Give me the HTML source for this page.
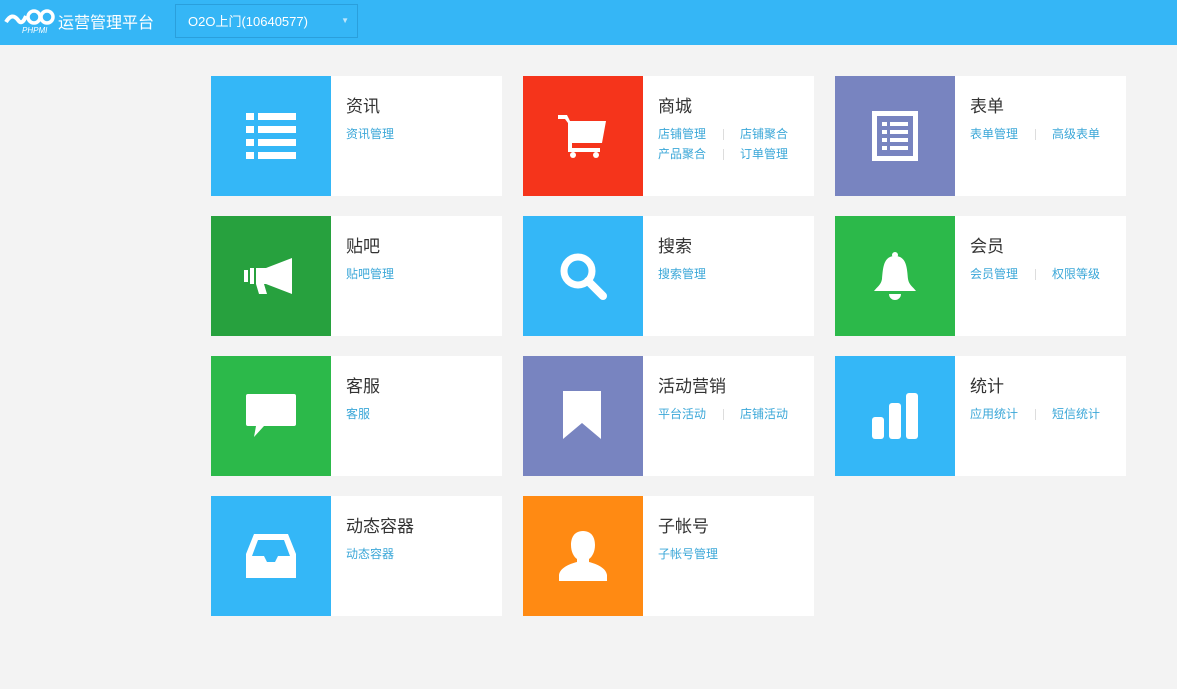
<!DOCTYPE html>
<html><head><meta charset="utf-8"><style>
*{margin:0;padding:0;box-sizing:border-box}
body{width:1177px;height:689px;background:#f3f3f3;font-family:"Liberation Sans","Noto Sans CJK SC",sans-serif;position:relative;overflow:hidden}
.hd{position:absolute;left:0;top:0;width:1177px;height:45px;background:#35b6f6}
.logo{position:absolute;left:4px;top:6px}
.ttl{position:absolute;left:58px;top:9px;color:#fff;font-size:16px}
.sel{position:absolute;left:175px;top:4px;width:183px;height:34px;border:1px solid #2a9fdc;color:#fff;font-size:13px;padding:6px 0 0 12px}
.sel i{position:absolute;right:8px;top:11px;font-style:normal;font-size:8px;color:#bde6fb}
.c{position:absolute;width:291px;height:120px;background:#fff}
.ic{position:absolute;left:0;top:0;width:120px;height:120px;display:flex;align-items:center;justify-content:center}
.t{position:absolute;left:135px;top:16px;font-size:17px;color:#333}
.l{position:absolute;left:135px;top:48px;font-size:12px;color:#3ba7d8;line-height:20px;white-space:nowrap;width:160px}
.l span{display:inline-block}
.l span.s{position:relative;width:82px}
.l span.s:after{content:"";position:absolute;left:65px;top:5px;width:1px;height:11px;background:#ddd}
</style></head><body>
<div class="hd">
<svg class="logo" width="52" height="30" viewBox="0 0 52 30"><path d="M2 16 Q8 6 14 14 Q18 20 22 10" stroke="#fff" stroke-width="4" fill="none"/><circle cx="30" cy="11" r="6" stroke="#fff" stroke-width="3.5" fill="none"/><circle cx="43" cy="11" r="6" stroke="#fff" stroke-width="3.5" fill="none"/><text x="18" y="27" font-size="8" fill="#fff" font-style="italic" font-family="Liberation Sans">PHPMI</text></svg>
<div class="ttl">运营管理平台</div>
<div class="sel">O2O上门(10640577)<i>▼</i></div>
</div>

<div class="c" style="left:211px;top:76px"><div class="ic" style="background:#34b7f7"><svg width="50" height="46" viewBox="0 0 50 46" fill="#fff"><rect x="0" y="0" width="8" height="7"/><rect x="12" y="0" width="38" height="7"/><rect x="0" y="13" width="8" height="7"/><rect x="12" y="13" width="38" height="7"/><rect x="0" y="26" width="8" height="7"/><rect x="12" y="26" width="38" height="7"/><rect x="0" y="39" width="8" height="7"/><rect x="12" y="39" width="38" height="7"/></svg></div><div class="t">资讯</div><div class="l">资讯管理</div></div>

<div class="c" style="left:523px;top:76px"><div class="ic" style="background:#f5341b"><svg width="50" height="46" viewBox="0 0 50 46" fill="#fff"><path d="M0 2h9l3 6h36l-4 22H14v5h28v4H10V10L7 6H0z"/><circle cx="15" cy="42" r="3"/><circle cx="38" cy="42" r="3"/></svg></div><div class="t">商城</div><div class="l"><span class="s">店铺管理</span><span>店铺聚合</span><br><span class="s">产品聚合</span><span>订单管理</span></div></div>

<div class="c" style="left:835px;top:76px"><div class="ic" style="background:#7884c0"><svg width="46" height="50" viewBox="0 0 46 50" fill="#fff"><path d="M0 0h46v50H0zM5 5v40h36V5z"/><rect x="10" y="11" width="5" height="4"/><rect x="18" y="11" width="18" height="4"/><rect x="10" y="19" width="5" height="4"/><rect x="18" y="19" width="18" height="4"/><rect x="10" y="27" width="5" height="4"/><rect x="18" y="27" width="18" height="4"/><rect x="10" y="35" width="5" height="4"/><rect x="18" y="35" width="18" height="4"/></svg></div><div class="t">表单</div><div class="l"><span class="s">表单管理</span><span>高级表单</span></div></div>

<div class="c" style="left:211px;top:216px"><div class="ic" style="background:#27a13e"><svg width="54" height="40" viewBox="0 0 54 40" fill="#fff"><path d="M12 12h10L48 2v36L22 28h-2l3 10h-8l-3-10z"/><rect x="0" y="14" width="4" height="12"/><rect x="6" y="12" width="4" height="16"/></svg></div><div class="t">贴吧</div><div class="l">贴吧管理</div></div>

<div class="c" style="left:523px;top:216px"><div class="ic" style="background:#34b7f7"><svg width="50" height="50" viewBox="0 0 50 50"><circle cx="20" cy="20" r="14" stroke="#fff" stroke-width="7" fill="none"/><path d="M30 30l15 15" stroke="#fff" stroke-width="8" stroke-linecap="round"/></svg></div><div class="t">搜索</div><div class="l">搜索管理</div></div>

<div class="c" style="left:835px;top:216px"><div class="ic" style="background:#2cb94a"><svg width="44" height="50" viewBox="0 0 44 50" fill="#fff"><circle cx="22" cy="4" r="3"/><path d="M22 5C10 5 10 18 9 28 8 34 4 36 1 40h42c-3-4-7-6-8-12C34 18 34 5 22 5z"/><path d="M16 43a6 6 0 0 0 12 0z"/></svg></div><div class="t">会员</div><div class="l"><span class="s">会员管理</span><span>权限等级</span></div></div>

<div class="c" style="left:211px;top:356px"><div class="ic" style="background:#2cb94a"><svg width="50" height="44" viewBox="0 0 50 44" fill="#fff"><path d="M2 0h46a2 2 0 0 1 2 2v28a2 2 0 0 1-2 2H18L8 43l2-11H2a2 2 0 0 1-2-2V2a2 2 0 0 1 2-2z"/></svg></div><div class="t">客服</div><div class="l">客服</div></div>

<div class="c" style="left:523px;top:356px"><div class="ic" style="background:#7884c0"><svg width="40" height="50" viewBox="0 0 40 50" fill="#fff"><path d="M0 0h38v48L19 32 0 48z"/></svg></div><div class="t">活动营销</div><div class="l"><span class="s">平台活动</span><span>店铺活动</span></div></div>

<div class="c" style="left:835px;top:356px"><div class="ic" style="background:#34b7f7"><svg width="46" height="46" viewBox="0 0 46 46" fill="#fff"><rect x="0" y="24" width="12" height="22" rx="3"/><rect x="17" y="10" width="12" height="36" rx="3"/><rect x="34" y="0" width="12" height="46" rx="3"/></svg></div><div class="t">统计</div><div class="l"><span class="s">应用统计</span><span>短信统计</span></div></div>

<div class="c" style="left:211px;top:496px"><div class="ic" style="background:#34b7f7"><svg width="50" height="44" viewBox="0 0 50 44" fill="#fff"><path d="M8 0h34l8 20v24H0V20zM12 6L6 22h12l3 6h8l3-6h12L38 6z"/></svg></div><div class="t">动态容器</div><div class="l">动态容器</div></div>

<div class="c" style="left:523px;top:496px"><div class="ic" style="background:#ff8a13"><svg width="50" height="50" viewBox="0 0 50 50" fill="#fff"><path d="M25 0c9 0 12 7 12 14s-3 12-6 14v3c8 2 17 6 18 13v6H1v-6c1-7 10-11 18-13v-3c-3-2-6-7-6-14S16 0 25 0z"/></svg></div><div class="t">子帐号</div><div class="l">子帐号管理</div></div>
</body></html>
